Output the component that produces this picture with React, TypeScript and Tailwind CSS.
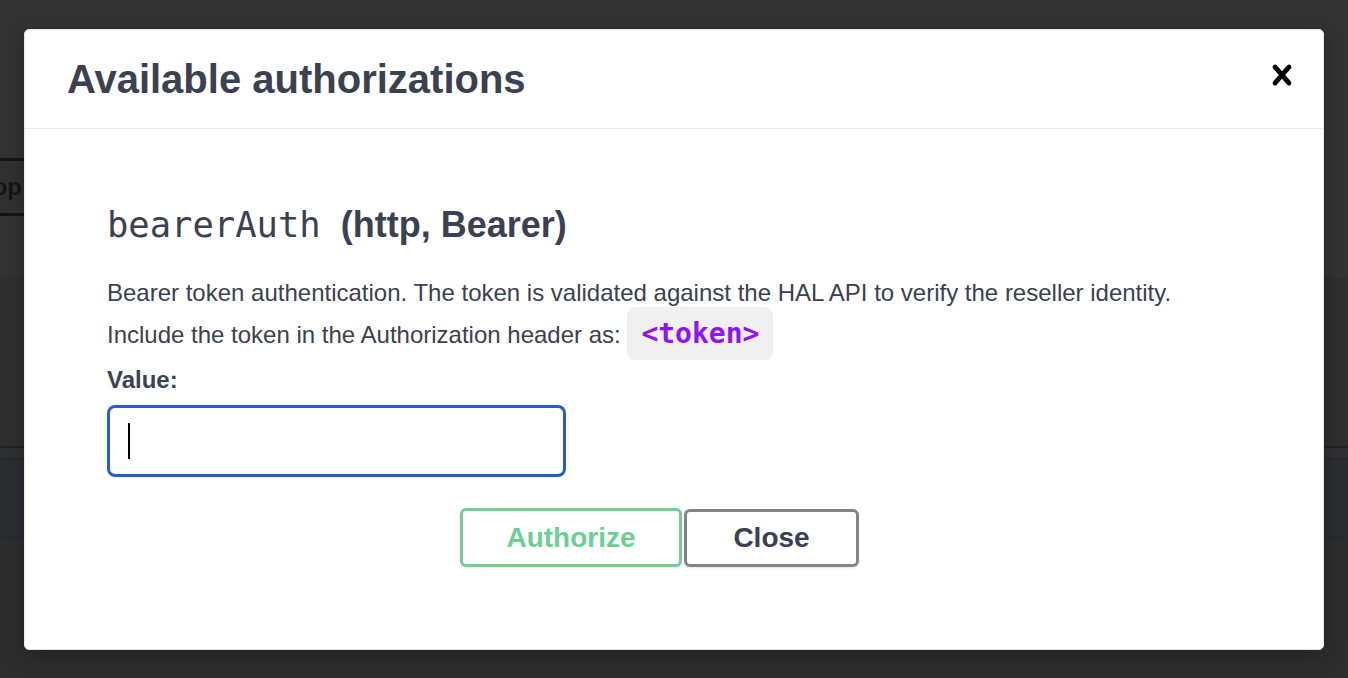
import React from "react";

function CloseIcon() {
  return (
    <svg width="40" height="40" viewBox="0 0 20 20" aria-hidden="true">
      <path
        fill="#000"
        d="M14.348 14.849a1.2 1.2 0 0 1-1.697 0L10 11.819l-2.651 3.029a1.2 1.2 0 1 1-1.697-1.697l2.758-3.15-2.759-3.152a1.2 1.2 0 1 1 1.697-1.697L10 8.183l2.651-3.031a1.2 1.2 0 1 1 1.697 1.697l-2.758 3.152 2.758 3.15a1.2 1.2 0 0 1 0 1.698z"
      />
    </svg>
  );
}

export default function App() {
  return (
    <div className="relative h-[678px] w-[1348px] overflow-hidden bg-[#333333] font-['Liberation_Sans',Arial,sans-serif]">
      {/* dimmed page behind the modal */}
      <div className="flex flex-col">
        <div className="h-[158px]" />
        <div className="flex h-[58px]">
          <div className="flex w-[40px] items-center justify-end overflow-hidden whitespace-nowrap border-y-[3px] border-[#151515] bg-[#313131] pr-[18px] text-[24px] font-bold text-[#151515]">
            Stop
          </div>
        </div>
        <div className="h-[61px]" />
        <div className="h-[169px] bg-[#2f2f2f]" />
        <div className="h-[2px] bg-[#222222]" />
        <div className="h-[10px] bg-[#303030]" />
        <div className="h-[1px] bg-[#1d2a3a]" />
        <div className="h-[78px] bg-[#2c2d30]" />
        <div className="h-[1px] bg-[#1d2a3a]" />
        <div className="h-[140px] bg-[#2d2d2d]" />
      </div>

      {/* modal */}
      <div className="absolute left-[24px] top-[29px] flex h-[621px] w-[1300px] flex-col rounded-[5px] border border-[#e6e6e6] bg-white shadow-[0_4px_20px_rgba(0,0,0,0.25)]">
        <div className="flex h-[99px] items-center justify-between border-b border-[#ebebeb] pl-[42px] pr-[21px]">
          <h3 className="text-[40px] font-bold leading-none text-[#3b4151]">
            Available authorizations
          </h3>
          <div className="mt-[25px] self-start">
            <CloseIcon />
          </div>
        </div>

        <div className="flex flex-col px-[82px] pt-[74px] text-[#3b4151]">
          <h4 className="whitespace-nowrap text-[36px] font-bold leading-[44px]">
            <span className="font-['DejaVu_Sans_Mono',monospace] text-[35.5px] font-normal">
              bearerAuth
            </span>
            <span className="ml-[20px]">(http, Bearer)</span>
          </h4>

          <div className="mt-[25px] text-[24px] leading-[42px]">
            <div>
              Bearer token authentication. The token is validated against the HAL API to verify the reseller identity.
            </div>
            <div className="whitespace-nowrap">
              Include the token in the Authorization header as:{" "}
              <code className="rounded-[8px] bg-[#f0f0f0] px-[14px] py-[10px] font-['DejaVu_Sans_Mono',monospace] text-[28px] font-bold leading-none text-[#9012fe]">
                &lt;token&gt;
              </code>
            </div>
          </div>

          <label className="mt-[9px] text-[24px] font-bold leading-[30px]">Value:</label>

          <div className="mt-[10px] flex h-[72px] w-[459px] items-center rounded-[8px] border-[3px] border-[#2560c8] pl-[18px]">
            <div className="h-[36px] w-[2px] bg-black" />
          </div>

          <div className="mt-[31px] flex items-end justify-center pr-[29px]">
            <button className="h-[59px] w-[222px] rounded-[6px] border-[3px] border-[#74cc98] bg-white text-[28px] font-bold text-[#6ccf94] shadow-[0_1px_2px_rgba(0,0,0,0.1)]">
              Authorize
            </button>
            <button className="ml-[2px] h-[58px] w-[175px] rounded-[6px] border-[3px] border-[#848484] bg-white text-[28px] font-bold text-[#3b4151] shadow-[0_1px_2px_rgba(0,0,0,0.1)]">
              Close
            </button>
          </div>
        </div>
      </div>
    </div>
  );
}
